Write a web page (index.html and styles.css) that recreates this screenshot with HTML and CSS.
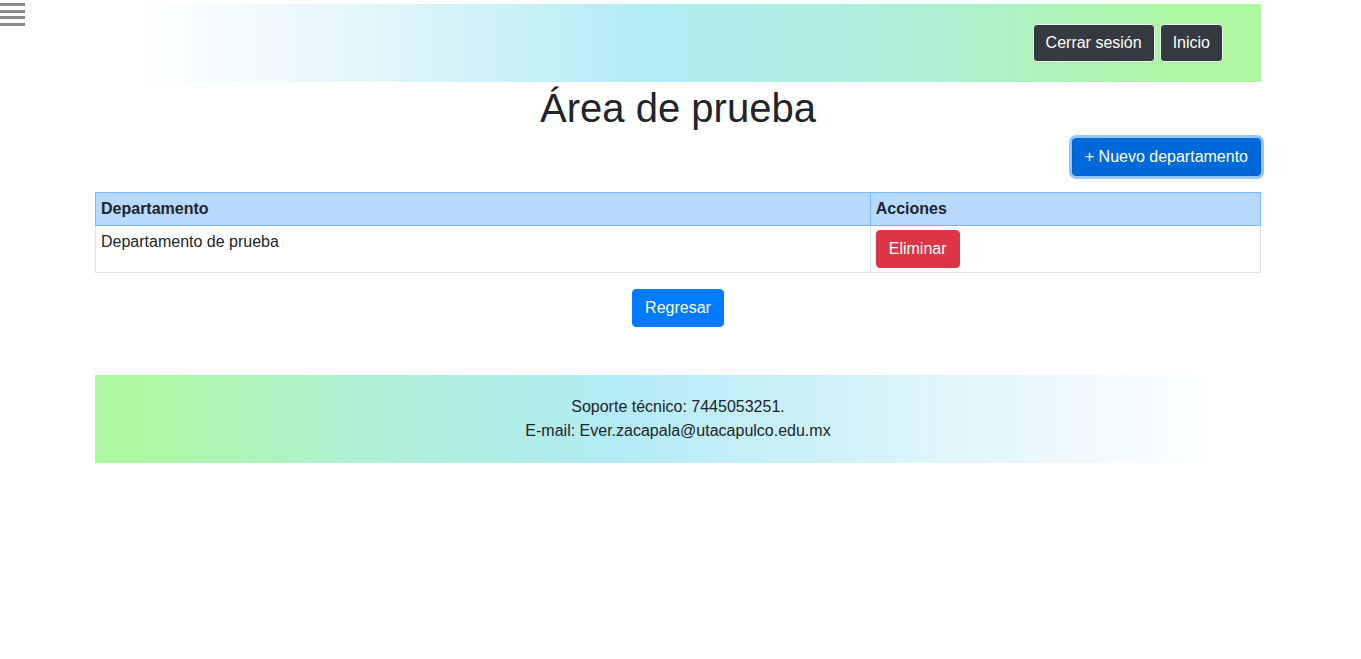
FILE: index.html
```html
<!DOCTYPE html>
<html lang="es">
<head>
<meta charset="utf-8">
<title>Área de prueba</title>
<link rel="stylesheet" href="styles.css">
</head>
<body>
<div class="menu-icon" aria-label="Menú">
  <span></span><span></span><span></span><span></span>
</div>
<div class="page">
  <header class="topbar">
    <button class="btn btn-dark">Cerrar sesión</button>
    <button class="btn btn-dark">Inicio</button>
  </header>
  <h1 class="title">Área de prueba</h1>
  <div class="actions">
    <button class="btn btn-primary-focus">+ Nuevo departamento</button>
  </div>
  <table class="grid">
    <thead>
      <tr><th class="col-a">Departamento</th><th>Acciones</th></tr>
    </thead>
    <tbody>
      <tr><td>Departamento de prueba</td><td><button class="btn btn-danger">Eliminar</button></td></tr>
    </tbody>
  </table>
  <div class="back">
    <button class="btn btn-primary">Regresar</button>
  </div>
  <footer class="footer">
    <p>Soporte técnico: 7445053251.</p>
    <p>E-mail: Ever.zacapala@utacapulco.edu.mx</p>
  </footer>
</div>
</body>
</html>
```
FILE: styles.css
```css
* { box-sizing: border-box; }
html, body { margin: 0; padding: 0; background: #fff; }
body {
  font-family: "Liberation Sans", Arial, sans-serif;
  font-size: 16px;
  line-height: 1.5;
  color: #212529;
}
.menu-icon {
  position: absolute;
  left: 0;
  top: 3px;
  width: 25px;
  display: flex;
  flex-direction: column;
  gap: 3.5px;
}
.menu-icon span {
  display: block;
  height: 3px;
  background: #8a8a8a;
}
.page {
  width: 1166px;
  margin-left: 95px;
  padding-top: 4px;
}
.topbar {
  height: 78px;
  display: flex;
  justify-content: flex-end;
  align-items: center;
  gap: 5px;
  padding-right: 38px;
  background: linear-gradient(to right, #ffffff 3%, #e6f7fb 22%, #b3ebf5 47%, #aeefd8 70%, #adf7a0 94%);
}
.btn {
  font-family: "Liberation Sans", Arial, sans-serif;
  font-size: 16px;
  line-height: 24px;
  padding: 6px 12px;
  border-radius: 4px;
  border: 1px solid transparent;
  cursor: pointer;
}
.btn-dark {
  background: #343a40;
  color: #fff;
  border-color: #eef3f0;
}
.btn-primary {
  background: #007bff;
  color: #fff;
  border-color: #007bff;
}
.btn-primary-focus {
  background: #0069d9;
  color: #fff;
  border-color: #0062cc;
  box-shadow: 0 0 0 3px rgba(38, 143, 255, 0.5);
}
.btn-danger {
  background: #dc3545;
  color: #fff;
  border-color: #dc3545;
}
.title {
  margin: 0 0 8px;
  text-align: center;
  font-size: 40px;
  font-weight: 500;
  line-height: 48px;
  padding-top: 2px;
  height: 48px;
}
.actions {
  display: flex;
  justify-content: flex-end;
  margin-bottom: 16px;
}
.grid {
  width: 100%;
  border-collapse: collapse;
  margin-bottom: 16px;
}
.grid th, .grid td {
  padding: 4px 5px;
  text-align: left;
  vertical-align: top;
  border: 1px solid #dee2e6;
}
.grid thead th {
  background: #b8daff;
  border-color: #7abaff;
  font-weight: 700;
}
.col-a { width: 66.5%; }
.back {
  display: flex;
  justify-content: center;
  margin-bottom: 48px;
}
.footer {
  padding: 20px 0;
  text-align: center;
  background: linear-gradient(to right, #adf9a0 3%, #aeefd8 25%, #b3ebf5 45%, #e2f6fb 75%, #ffffff 97%);
}
.footer p { margin: 0; }
```
